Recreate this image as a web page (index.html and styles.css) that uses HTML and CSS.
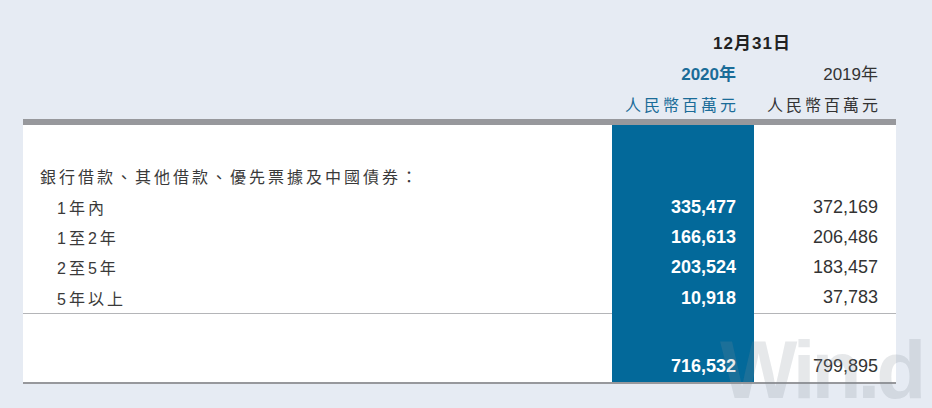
FILE: index.html
```html
<!DOCTYPE html>
<html lang="zh-Hant">
<head>
    <meta charset="UTF-8">
    <meta name="viewport" content="width=device-width, initial-scale=1.0">
    <title>借款到期分析</title>
    <link rel="stylesheet" href="styles.css">
</head>
<body>
    <div class="page">
        <div class="head">
            <div class="head-row">
                <div></div>
                <div class="date">12月31日</div>
            </div>
            <div class="head-row">
                <div></div>
                <div class="year current">2020年</div>
                <div class="year">2019年</div>
            </div>
            <div class="head-row">
                <div></div>
                <div class="unit current">人民幣百萬元</div>
                <div class="unit">人民幣百萬元</div>
            </div>
        </div>

        <div class="table">
            <div class="row spacer"><div></div><div class="hl"></div><div></div></div>
            <div class="row title">
                <div class="label">銀行借款、其他借款、優先票據及中國債券：</div>
                <div class="hl"></div>
                <div></div>
            </div>
            <div class="row">
                <div class="label sub">1年內</div>
                <div class="num hl">335,477</div>
                <div class="num">372,169</div>
            </div>
            <div class="row">
                <div class="label sub">1至2年</div>
                <div class="num hl">166,613</div>
                <div class="num">206,486</div>
            </div>
            <div class="row">
                <div class="label sub">2至5年</div>
                <div class="num hl">203,524</div>
                <div class="num">183,457</div>
            </div>
            <div class="row last">
                <div class="label sub">5年以上</div>
                <div class="num hl">10,918</div>
                <div class="num">37,783</div>
            </div>
            <div class="row gap"><div></div><div class="hl"></div><div></div></div>
            <div class="row total">
                <div></div>
                <div class="num hl">716,532</div>
                <div class="num">799,895</div>
            </div>
        </div>
    </div>
    <div class="watermark" aria-hidden="true">Win.d</div>
</body>
</html>
```

FILE: styles.css
```css
body {
    margin: 0;
    background-color: #e6ebf3;
    color: #333;
    font-family: "Liberation Sans", "Noto Sans CJK TC", sans-serif;
}
.page {
    width: 873px;
    margin-left: 23px;
    padding-bottom: 23px;
}
.head {
    padding-top: 26px;
}
.head-row {
    display: grid;
    grid-template-columns: 589px 142px 142px;
    height: 31px;
    align-items: center;
}
.date {
    grid-column: 2 / span 2;
    text-align: center;
    font-size: 17px;
    font-weight: bold;
    letter-spacing: 1px;
    color: #222;
    padding-right: 4px;
}
.year {
    text-align: right;
    font-size: 17px;
    padding-right: 18px;
}
.unit {
    text-align: right;
    font-size: 16px;
    letter-spacing: 3px;
    padding-right: 15px;
}
.current {
    color: #1a6c98;
    font-weight: bold;
}
.unit.current {
    font-weight: normal;
}
.table {
    background-color: white;
    border-top: 6px solid #97989c;
    border-bottom: 2px solid #97989c;
}
.row {
    display: grid;
    grid-template-columns: 589px 142px 142px;
    height: 30px;
    align-items: stretch;
}
.row > div {
    display: flex;
    align-items: center;
}
.spacer {
    height: 35px;
}
.title {
    height: 32px;
}
.last {
    height: 32px;
}
.last > div:not(.hl) {
    border-bottom: 1px solid #b4b5b8;
}
.gap {
    height: 36px;
}
.total {
    height: 32px;
}
.label {
    font-size: 16px;
    letter-spacing: 3px;
    padding-left: 17px;
    color: #3a3a3a;
}
.label.sub {
    padding-left: 34px;
}
.num {
    justify-content: flex-end;
    font-size: 18px;
    padding-right: 18px;
    color: #333;
}
.hl {
    background-color: #03699a;
}
.num.hl {
    color: white;
    font-weight: bold;
}
.watermark {
    position: absolute;
    left: 720px;
    top: 337px;
    font-size: 82px;
    line-height: 0.8;
    font-weight: bold;
    letter-spacing: -4px;
    color: rgba(130, 140, 150, 0.2);
    pointer-events: none;
}
```
